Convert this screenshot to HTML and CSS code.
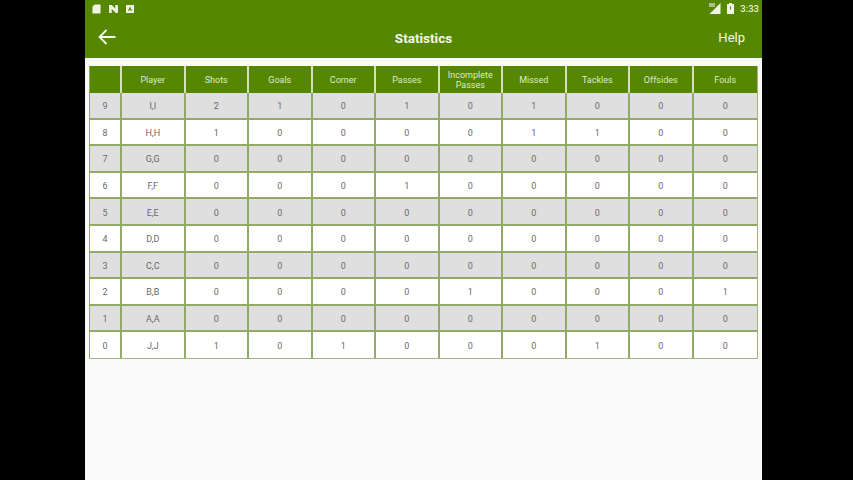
FILE: index.html
```html
<!DOCTYPE html>
<html lang="en">
<head>
<meta charset="utf-8">
<title>Statistics</title>
<link rel="stylesheet" href="styles.css">
</head>
<body>
<main class="app">
  <div class="status">
    <div class="status-left">
      <svg class="ic" width="9" height="10" viewBox="0 0 10 11"><path d="M3 .5h6.500v10H.5V3z" fill="#eef3e4"/></svg>
      <svg class="ic" width="9" height="8" viewBox="0 0 10 9"><path d="M0 0h3l4 4V0h3v9H7.500L3 4.500V9H0z" fill="#eef3e4"/></svg>
      <svg class="ic" width="8" height="8" viewBox="0 0 8 8"><path fill-rule="evenodd" d="M0 0h8v8H0zM4 1.500 2 6h1l.4-1h1.200l.4 1h1z" fill="#eef3e4"/></svg>
    </div>
    <div class="status-right">
      <svg class="ic" width="12" height="11" viewBox="0 0 12 11"><path d="M11.500 0v11H.5z" fill="#eef3e4"/><path d="M0 0h6v4H0z" fill="#a9bf85"/></svg>
      <svg class="ic" width="7" height="11" viewBox="0 0 7 11"><path fill-rule="evenodd" d="M2 0h3v1h2v10H0V1h2zM3 3.500v3h1v-3z" fill="#eef3e4"/></svg>
      <span class="clock">3:33</span>
    </div>
  </div>
  <header class="bar">
    <svg class="back" width="18" height="16" viewBox="0 0 18 16"><path d="M17.500 8H2M8.500 1 1.500 8l7 7" fill="none" stroke="#f4f7ee" stroke-width="1.800"/></svg>
    <h1 class="title">Statistics</h1>
    <span class="help">Help</span>
  </header>
  <div class="stats">
    <div class="row head">
      <div class="cell"></div><div class="cell">Player</div><div class="cell">Shots</div><div class="cell">Goals</div><div class="cell">Corner</div><div class="cell">Passes</div><div class="cell">Incomplete Passes</div><div class="cell">Missed</div><div class="cell">Tackles</div><div class="cell">Offsides</div><div class="cell">Fouls</div>
    </div>
    <div class="row alt"><div class="cell">9</div><div class="cell">I,I</div><div class="cell">2</div><div class="cell">1</div><div class="cell">0</div><div class="cell">1</div><div class="cell">0</div><div class="cell">1</div><div class="cell">0</div><div class="cell">0</div><div class="cell">0</div></div>
    <div class="row"><div class="cell">8</div><div class="cell">H,H</div><div class="cell">1</div><div class="cell">0</div><div class="cell">0</div><div class="cell">0</div><div class="cell">0</div><div class="cell">1</div><div class="cell">1</div><div class="cell">0</div><div class="cell">0</div></div>
    <div class="row alt"><div class="cell">7</div><div class="cell">G,G</div><div class="cell">0</div><div class="cell">0</div><div class="cell">0</div><div class="cell">0</div><div class="cell">0</div><div class="cell">0</div><div class="cell">0</div><div class="cell">0</div><div class="cell">0</div></div>
    <div class="row"><div class="cell">6</div><div class="cell">F,F</div><div class="cell">0</div><div class="cell">0</div><div class="cell">0</div><div class="cell">1</div><div class="cell">0</div><div class="cell">0</div><div class="cell">0</div><div class="cell">0</div><div class="cell">0</div></div>
    <div class="row alt"><div class="cell">5</div><div class="cell">E,E</div><div class="cell">0</div><div class="cell">0</div><div class="cell">0</div><div class="cell">0</div><div class="cell">0</div><div class="cell">0</div><div class="cell">0</div><div class="cell">0</div><div class="cell">0</div></div>
    <div class="row"><div class="cell">4</div><div class="cell">D,D</div><div class="cell">0</div><div class="cell">0</div><div class="cell">0</div><div class="cell">0</div><div class="cell">0</div><div class="cell">0</div><div class="cell">0</div><div class="cell">0</div><div class="cell">0</div></div>
    <div class="row alt"><div class="cell">3</div><div class="cell">C,C</div><div class="cell">0</div><div class="cell">0</div><div class="cell">0</div><div class="cell">0</div><div class="cell">0</div><div class="cell">0</div><div class="cell">0</div><div class="cell">0</div><div class="cell">0</div></div>
    <div class="row"><div class="cell">2</div><div class="cell">B,B</div><div class="cell">0</div><div class="cell">0</div><div class="cell">0</div><div class="cell">0</div><div class="cell">1</div><div class="cell">0</div><div class="cell">0</div><div class="cell">0</div><div class="cell">1</div></div>
    <div class="row alt"><div class="cell">1</div><div class="cell">A,A</div><div class="cell">0</div><div class="cell">0</div><div class="cell">0</div><div class="cell">0</div><div class="cell">0</div><div class="cell">0</div><div class="cell">0</div><div class="cell">0</div><div class="cell">0</div></div>
    <div class="row"><div class="cell">0</div><div class="cell">J,J</div><div class="cell">1</div><div class="cell">0</div><div class="cell">1</div><div class="cell">0</div><div class="cell">0</div><div class="cell">0</div><div class="cell">1</div><div class="cell">0</div><div class="cell">0</div></div>
  </div>
</main>
</body>
</html>
```
FILE: styles.css
```css
* { box-sizing: border-box; }
html, body { margin: 0; height: 100%; background: #000; overflow: hidden; }
body { font-family: Roboto, "Liberation Sans", sans-serif; }
.app {
  width: 677px;
  height: 480px;
  margin-left: 85px;
  background: #fafafa;
  display: flex;
  flex-direction: column;
}
.status {
  height: 17px;
  flex: none;
  background: #558800;
  display: flex;
  justify-content: space-between;
  align-items: center;
  padding: 0 3px 0 7px;
}
.status-left { display: flex; align-items: center; gap: 8px; }
.status-right { display: flex; align-items: center; gap: 6px; }
.ic { display: block; }
.clock { font-size: 9.500px; color: #e6eeda; font-weight: 500; }
.bar {
  height: 41px;
  flex: none;
  background: #558800;
  display: flex;
  align-items: center;
  justify-content: space-between;
  padding: 0 17px 0 13px;
  position: relative;
  color: #f2f6ea;
}
.back { margin-top: -1px; }
.title {
  margin: 0;
  font-size: 13.500px;
  font-weight: 700;
  position: absolute;
  left: 0;
  right: 0;
  text-align: center;
  top: 13px;
  line-height: 16px;
  color: #f4f7ee;
}
.help { font-size: 13px; }
.stats {
  margin: 8px 4px 0 4px;
  width: 669px;
  border-left: 1px solid #90a85c;
  border-right: 1px solid #a3b57a;
  border-bottom: 1px solid #a3b57a;
}
.row {
  display: grid;
  grid-template-columns: 32px repeat(10, 1fr);
  height: 26.600px;
  border-bottom: 2px solid #92aa68;
  background: #fff;
}
.row:last-child { border-bottom: 0; height: 26px; }
.row.alt { background: #e0dfe0; }
.cell {
  display: flex;
  align-items: center;
  justify-content: center;
  text-align: center;
  font-size: 9px;
  line-height: 10px;
  padding-top: 2px;
  color: #6a6a6a;
  border-right: 2px solid #92aa68;
}
.cell:last-child { border-right: 0; }
.head {
  height: 27px;
  background: #558800;
  border-bottom: 0;
}
.head .cell {
  color: #dfe9cd;
  border-right: 2px solid #d3e0bb;
  padding: 0 6px;
}
.head .cell:last-child { border-right: 0; }
```
